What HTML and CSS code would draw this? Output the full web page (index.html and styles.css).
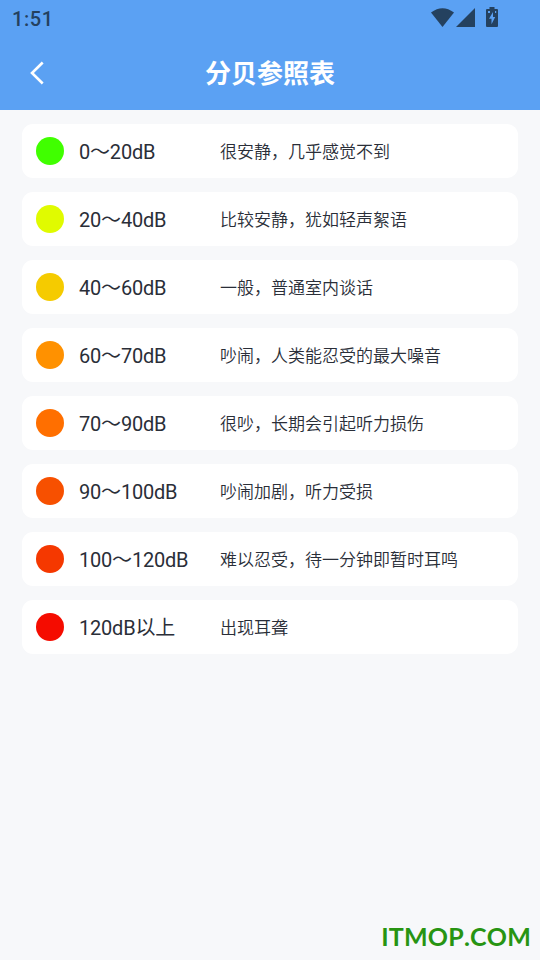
FILE: index.html
```html
<!DOCTYPE html>
<html lang="zh-CN">
<head>
<meta charset="utf-8">
<title>分贝参照表</title>
<link rel="stylesheet" href="styles.css">
</head>
<body>
<header class="top">
  <div class="status">
    <span class="clock">1:51</span>
    <svg class="wifi" viewBox="0 0 23 20" width="23" height="20"><path d="M0 4.600Q11.500-4.200 23 4.600L11.500 19Z"/></svg>
    <svg class="signal" viewBox="0 0 20 20" width="20" height="20"><path d="M19 0V19H0Z"/></svg>
    <svg class="battery" viewBox="0 0 12 20" width="12" height="20"><path fill-rule="evenodd" d="M3.500 0h5v2H11q1 0 1 1v16q0 1-1 1H1q-1 0-1-1V3q0-1 1-1h2.500zM7 5L3 11.700H5.500v5.600L9.200 10H7zM2 4v2h2V4zM9 4v2h1.200V4z"/></svg>
  </div>
  <div class="bar">
    <svg class="back" viewBox="0 0 14 24" width="14" height="24"><path d="M12.700 1.500L2 12L12.700 22.500"/></svg>
    <h1 class="title">分贝参照表</h1>
  </div>
</header>
<main class="list">
  <div class="row"><i class="dot c1"></i><span class="range">0～20dB</span><span class="desc">很安静，几乎感觉不到</span></div>
  <div class="row"><i class="dot c2"></i><span class="range">20～40dB</span><span class="desc">比较安静，犹如轻声絮语</span></div>
  <div class="row"><i class="dot c3"></i><span class="range">40～60dB</span><span class="desc">一般，普通室内谈话</span></div>
  <div class="row"><i class="dot c4"></i><span class="range">60～70dB</span><span class="desc">吵闹，人类能忍受的最大噪音</span></div>
  <div class="row"><i class="dot c5"></i><span class="range">70～90dB</span><span class="desc">很吵，长期会引起听力损伤</span></div>
  <div class="row"><i class="dot c6"></i><span class="range">90～100dB</span><span class="desc">吵闹加剧，听力受损</span></div>
  <div class="row"><i class="dot c7"></i><span class="range">100～120dB</span><span class="desc">难以忍受，待一分钟即暂时耳鸣</span></div>
  <div class="row"><i class="dot c8"></i><span class="range">120dB以上</span><span class="desc">出现耳聋</span></div>
</main>
<footer class="mark">ITMOP.COM</footer>
</body>
</html>
```
FILE: styles.css
```css
* { box-sizing: border-box; }
body {
  margin: 0;
  height: 960px;
  display: flex;
  flex-direction: column;
  overflow: hidden;
  background: #f7f8fa;
  color: #2a2e38;
  font-family: Roboto, "Noto Sans CJK SC", sans-serif;
}
.top { height: 110px; background: #5ba1f3; }
.status {
  height: 36px;
  padding: 0 42px 0 12px;
  display: flex;
  align-items: center;
  fill: #24415f;
}
.clock {
  flex: 1;
  padding-top: 2px;
  color: #24415f;
  font-size: 20px;
  font-weight: 500;
  letter-spacing: .6px;
}
.signal { margin-left: 2px; }
.battery { margin-left: 10px; margin-top: -2px; }
.bar {
  height: 74px;
  padding: 0 30px;
  display: flex;
  align-items: center;
}
.back { fill: none; stroke: #fff; stroke-width: 2.6; }
.title {
  flex: 1;
  margin: 0 14px 0 0;
  padding-top: 2px;
  text-align: center;
  color: #fff;
  font-size: 26px;
  font-weight: 700;
  line-height: 38px;
}
.list {
  flex: 1;
  padding: 14px 22px;
  display: flex;
  flex-direction: column;
  gap: 14px;
}
.row {
  height: 54px;
  padding: 0 14px;
  display: flex;
  align-items: center;
  background: #fff;
  border-radius: 11px;
}
.dot { width: 28px; height: 28px; margin-right: 15px; border-radius: 50%; }
.range { width: 141px; padding-top: 2px; font-size: 20px; line-height: 30px; letter-spacing: -.2px; }
.desc { padding-top: 2px; font-size: 17px; font-weight: 350; line-height: 26px; white-space: nowrap; }
.c1 { background: #40ff00; }
.c2 { background: #e0fb00; }
.c3 { background: #f5cb00; }
.c4 { background: #ff9100; }
.c5 { background: #ff6f00; }
.c6 { background: #f75000; }
.c7 { background: #f53800; }
.c8 { background: #f50c00; }
.mark {
  height: 46px;
  padding-right: 9px;
  text-align: right;
  color: #279412;
  font: 700 25px/44px Lato, sans-serif;
  font-kerning: none;
  letter-spacing: .2px;
}
```
